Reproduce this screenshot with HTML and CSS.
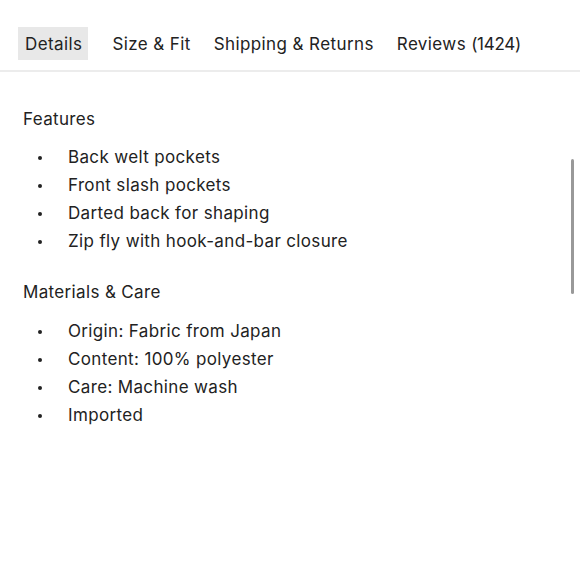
FILE: index.html
```html
<!DOCTYPE html>
<html>
<head>
<meta charset="utf-8">
<link rel="stylesheet" href="styles.css">
</head>
<body>
<div class="page">
  <nav class="tabs">
    <span class="tab active">Details</span>
    <span class="tab">Size &amp; Fit</span>
    <span class="tab">Shipping &amp; Returns</span>
    <span class="tab">Reviews <span class="count">(1424)</span></span>
  </nav>
  <section class="content">
    <h3 class="heading">Features</h3>
    <ul class="list">
      <li>Back welt pockets</li>
      <li>Front slash pockets</li>
      <li>Darted back for shaping</li>
      <li>Zip fly with hook-and-bar closure</li>
    </ul>
    <h3 class="heading second">Materials &amp; Care</h3>
    <ul class="list">
      <li>Origin: Fabric from Japan</li>
      <li>Content: 100% polyester</li>
      <li>Care: Machine wash</li>
      <li>Imported</li>
    </ul>
  </section>
  <div class="scrollbar"></div>
</div>
</body>
</html>
```

FILE: styles.css
```css
html, body {
  margin: 0;
  padding: 0;
  background: #fff;
}
.page {
  position: relative;
  width: 580px;
  height: 580px;
  font-family: "Inter", "Noto Sans", sans-serif;
  color: #222;
}
.tabs {
  display: flex;
  align-items: center;
  gap: 11px;
  padding: 27px 0 10px 18px;
  border-bottom: 2px solid #ececec;
}
.tab {
  font-size: 17px;
  line-height: 31px;
  padding: 2px 6px 0;
  letter-spacing: 0.4px;
}
.tab.active {
  background: #e8e8e8;
  padding-left: 7px;
  margin-right: 7px;
}
.count {
  letter-spacing: -0.3px;
}
.content {
  padding: 35px 0 0 23px;
}
.heading {
  margin: 0;
  font-weight: 400;
  font-size: 17px;
  line-height: 24px;
  letter-spacing: 0.35px;
}
.heading.second {
  margin-top: 25px;
}
.list {
  list-style: none;
  margin: 12px 0 0 0;
  padding: 0;
}
.heading.second + .list {
  margin-top: 13px;
}
.list li {
  position: relative;
  font-size: 17px;
  line-height: 28px;
  padding-left: 45px;
  letter-spacing: 0.35px;
}
.list li::before {
  content: "";
  position: absolute;
  left: 15px;
  top: 13px;
  width: 4px;
  height: 4px;
  border-radius: 50%;
  background: #222;
}
.scrollbar {
  position: absolute;
  right: 6px;
  top: 159px;
  width: 3px;
  height: 135px;
  border-radius: 2px;
  background: #999;
}
```
